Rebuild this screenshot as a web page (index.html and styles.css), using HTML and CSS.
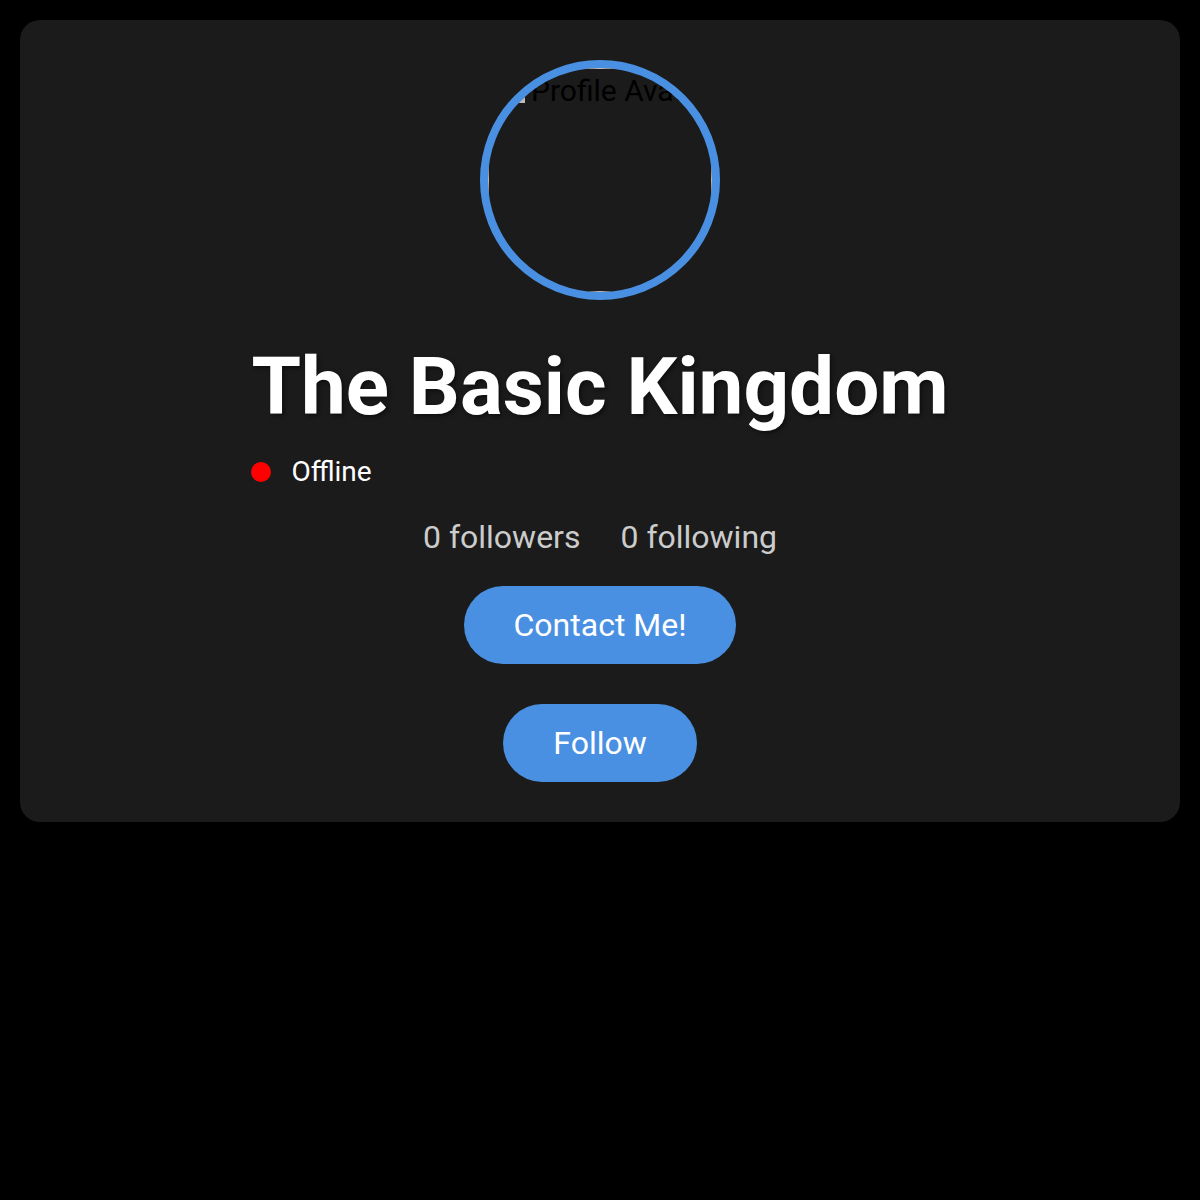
FILE: index.html
```html
<!DOCTYPE html>
<html>
<head>
<meta charset="utf-8">
<link rel="stylesheet" href="styles.css">
</head>
<body>
<div class="card">
  <div class="avatar">
    <div class="broken">
      <span class="broken-icon"></span><span class="alt">Profile Avatar</span>
    </div>
  </div>
  <div class="head">
    <h1 class="name">The Basic Kingdom</h1>
    <div class="status"><span class="dot"></span><span class="status-text">Offline</span></div>
  </div>
  <div class="stats">
    <span>0 followers</span>
    <span>0 following</span>
  </div>
  <button class="btn">Contact Me!</button>
  <button class="btn">Follow</button>
</div>
</body>
</html>
```
FILE: styles.css
```css
html, body {
  margin: 0;
  padding: 0;
  background: #000;
}
body {
  padding: 20px;
  font-family: Roboto, "Liberation Sans", sans-serif;
}
.card {
  background: #1b1b1b;
  border-radius: 20px;
  padding: 40px;
  display: flex;
  flex-direction: column;
  align-items: center;
}
.avatar {
  width: 224px;
  height: 224px;
  border: 8px solid #4a90e2;
  border-radius: 50%;
  overflow: hidden;
  box-sizing: content-box;
}
.broken {
  width: 224px;
  height: 224px;
  box-sizing: border-box;
  border: 1px solid #c0c0c0;
  padding: 5px 0 0 20px;
  white-space: nowrap;
  font-size: 30px;
  color: #000;
  line-height: 1.15;
}
.broken-icon {
  display: inline-block;
  width: 16px;
  height: 16px;
  background: #bdbdbd;
  margin-right: 6px;
  vertical-align: -2px;
}
.head {
  display: flex;
  flex-direction: column;
  align-items: flex-start;
  margin-top: 40px;
}
.name {
  margin: 0;
  font-size: 80px;
  font-weight: 700;
  color: #fff;
  line-height: 94px;
  text-shadow: 2px 2px 4px rgba(0, 0, 0, 0.5);
}
.status {
  display: flex;
  align-items: center;
  gap: 20px;
  margin-top: 21px;
}
.dot {
  width: 20px;
  height: 20px;
  border-radius: 50%;
  background: #ff0000;
}
.status-text {
  font-size: 28px;
  color: #fff;
}
.stats {
  display: flex;
  gap: 40px;
  margin-top: 30px;
  font-size: 32px;
  color: #cccccc;
}
.btn {
  margin-top: 30px;
  background: #4a90e2;
  color: #fff;
  border: none;
  border-radius: 40px;
  padding: 20px 50px;
  font-family: Roboto, "Liberation Sans", sans-serif;
  font-size: 32px;
  line-height: 38px;
}
.btn + .btn {
  margin-top: 40px;
}
```
